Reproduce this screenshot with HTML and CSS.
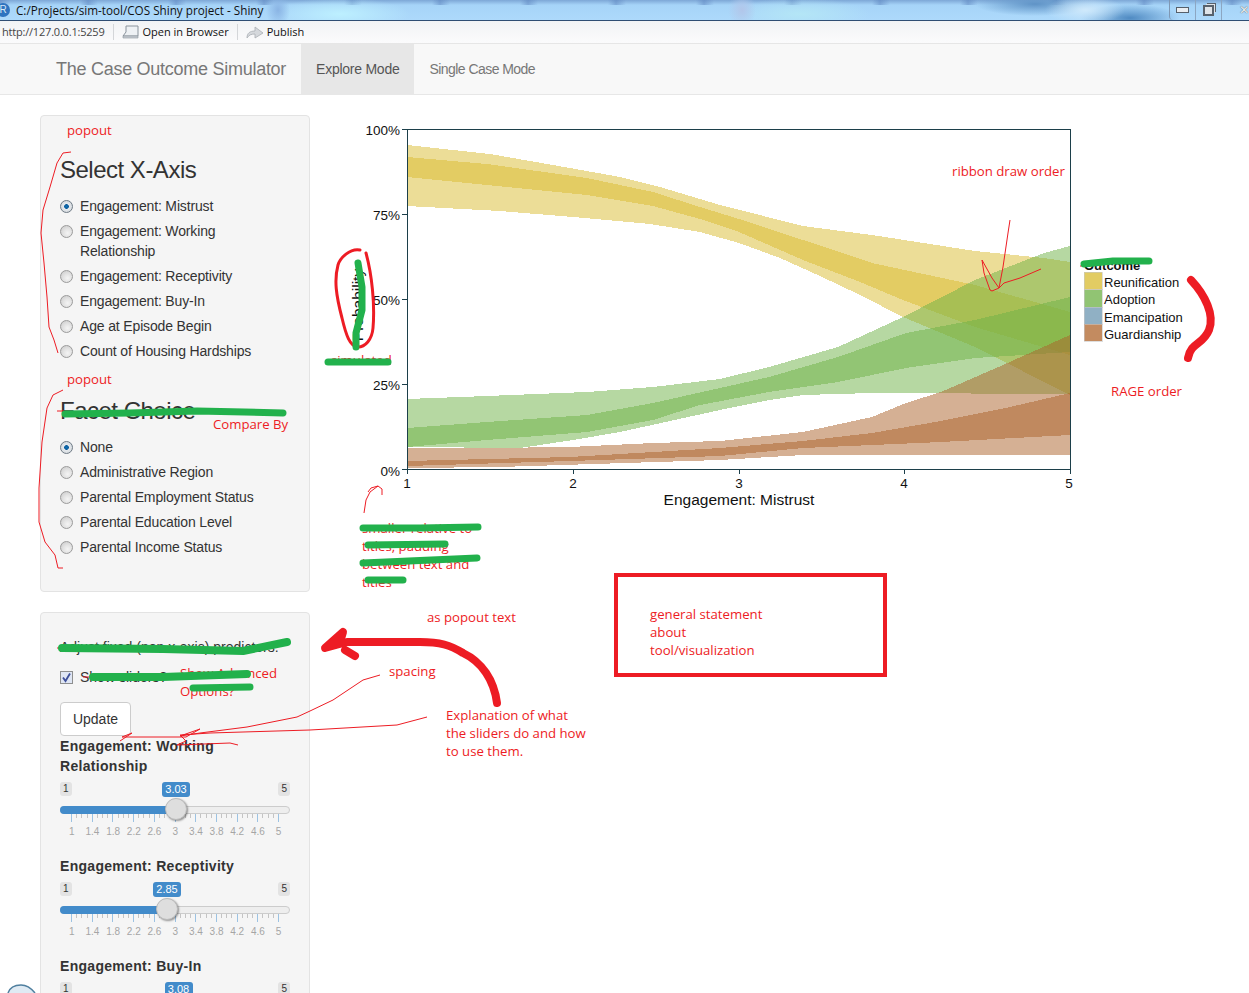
FILE: index.html
```html
<!DOCTYPE html>
<html lang="en">
<head>
  <meta charset="UTF-8">
  <title>The Case Outcome Simulator</title>
  <link rel="stylesheet" href="styles.css">
</head>
<body>
  <div class="titlebar">
    <span class="r-icon">R</span>
    <span class="window-title">C:/Projects/sim-tool/COS Shiny project - Shiny</span>
    <div class="window-buttons">
      <span class="win-btn"><i class="min-glyph"></i></span>
      <span class="win-btn"><i class="restore-glyph"></i></span>
      <span class="win-close">&#10005;</span>
    </div>
  </div>

  <div class="toolbar">
    <span class="url">http://127.0.0.1:5259</span>
    <span class="tool-sep"></span>
    <svg class="tool-icon" width="18" height="14" viewBox="0 0 18 14">
      <path d="M4 1h12v10H1l3-4z" fill="#eef1f4" stroke="#8a939c"/>
      <path d="M1 11h15v2H1z" fill="#c9ced4" stroke="#8a939c" stroke-width=".6"/>
    </svg>
    <span class="tool-label">Open in Browser</span>
    <span class="tool-sep"></span>
    <svg class="tool-icon" width="18" height="14" viewBox="0 0 18 14">
      <path d="M1 13c0-5 3-7 8-7V2l8 6-8 5V9c-4 0-6 1-8 4z" fill="#d5d8dc" stroke="#a9aeb4" stroke-width=".8"/>
    </svg>
    <span class="tool-label">Publish</span>
  </div>

  <nav class="navbar">
    <a class="brand">The Case Outcome Simulator</a>
    <a class="tab active">Explore Mode</a>
    <a class="tab">Single Case Mode</a>
  </nav>

  <div class="page">
    <aside class="sidebar">
      <div class="well">
        <h3>Select X-Axis</h3>
        <div class="radio-group">
          <label class="radio"><input type="radio" name="xaxis" checked><span>Engagement: Mistrust</span></label>
          <label class="radio"><input type="radio" name="xaxis"><span>Engagement: Working Relationship</span></label>
          <label class="radio"><input type="radio" name="xaxis"><span>Engagement: Receptivity</span></label>
          <label class="radio"><input type="radio" name="xaxis"><span>Engagement: Buy-In</span></label>
          <label class="radio"><input type="radio" name="xaxis"><span>Age at Episode Begin</span></label>
          <label class="radio"><input type="radio" name="xaxis"><span>Count of Housing Hardships</span></label>
        </div>
        <h3 class="second">Facet Choice</h3>
        <div class="radio-group">
          <label class="radio"><input type="radio" name="facet" checked><span>None</span></label>
          <label class="radio"><input type="radio" name="facet"><span>Administrative Region</span></label>
          <label class="radio"><input type="radio" name="facet"><span>Parental Employment Status</span></label>
          <label class="radio"><input type="radio" name="facet"><span>Parental Education Level</span></label>
          <label class="radio"><input type="radio" name="facet"><span>Parental Income Status</span></label>
        </div>
      </div>

      <div class="well well-sliders">
        <p class="adjust">Adjust fixed (non x-axis) predictors:</p>
        <div class="show-row">
          <span class="checkbox">
            <svg width="11" height="11" viewBox="0 0 11 11"><path d="M2 5.5l2.5 3.5L9 1.5" fill="none" stroke="#3d4f9a" stroke-width="1.8"/></svg>
          </span>
          <span>Show sliders?</span>
        </div>
        <button class="update">Update</button>

        <div class="control">
          <label class="control-label">Engagement: Working Relationship</label>
          <div class="slider">
            <div class="slider-ends"><span>1</span><span>5</span></div>
            <div class="track"><div class="bar" style="width:116px"></div></div>
            <span class="badge" style="left:116px">3.03</span>
            <span class="handle" style="left:116px"></span>
            <div class="ticks"></div>
            <div class="tick-labels"><span>1</span><span>1.4</span><span>1.8</span><span>2.2</span><span>2.6</span><span>3</span><span>3.4</span><span>3.8</span><span>4.2</span><span>4.6</span><span>5</span></div>
          </div>
        </div>

        <div class="control">
          <label class="control-label">Engagement: Receptivity</label>
          <div class="slider">
            <div class="slider-ends"><span>1</span><span>5</span></div>
            <div class="track"><div class="bar" style="width:107px"></div></div>
            <span class="badge" style="left:107px">2.85</span>
            <span class="handle" style="left:107px"></span>
            <div class="ticks"></div>
            <div class="tick-labels"><span>1</span><span>1.4</span><span>1.8</span><span>2.2</span><span>2.6</span><span>3</span><span>3.4</span><span>3.8</span><span>4.2</span><span>4.6</span><span>5</span></div>
          </div>
        </div>

        <div class="control">
          <label class="control-label">Engagement: Buy-In</label>
          <div class="slider">
            <div class="slider-ends"><span>1</span><span>5</span></div>
            <span class="badge" style="left:118.5px">3.08</span>
          </div>
        </div>
      </div>
    </aside>

    <main class="plot-area">
      <!-- viewBox uses page coordinates so the plot data reads straight off the screenshot -->
      <svg class="plot" width="900" height="410" viewBox="320 115 900 410">
        <g shape-rendering="crispEdges">
          <g fill="#d9bb2f" fill-opacity=".5">
            <polygon points="407,145 490,154 570,168 620,177 660,187 720,205 803,226 872,235 975,251 1044,258 1070,262 1070,395 975,347 903,317 860,295 820,276 780,258 739,243 700,232 650,224 573,217 500,211 407,206"/>
            <polygon points="407,157 487,164 587,178 653,192 700,207 739,219 803,240 872,263 975,285 1070,312 1070,355 975,327 903,300 860,282 803,260 739,232 700,219 653,206 587,195 487,185 407,177"/>
          </g>
          <g fill="#6db145" fill-opacity=".5">
            <polygon points="407,399 487,396 587,392 653,387 720,379 769,367 838,347 903,317 975,280 1044,253 1070,246 1070,394 872,393 803,395 770,400 720,410 670,421 620,432 573,440 520,448 407,447"/>
            <polygon points="407,428 487,422 587,415 653,403 720,388 769,377 838,357 906,333 975,320 1070,297 1070,352 975,358 906,368 838,382 769,392 700,405 653,420 587,432 487,440 407,447"/>
          </g>
          <g fill="#ac622a" fill-opacity=".5">
            <polygon points="407,448 487,448 570,447 653,443 720,441 803,432 872,417 906,403 941,392 1003,365 1070,335 1070,455 1003,455 803,455 720,460 500,467 407,468"/>
            <polygon points="407,461 570,457 720,448 803,441 872,433 941,421 1010,407 1070,393 1070,435 941,442 872,445 803,448 720,456 570,461 407,466"/>
          </g>
        </g>

        <g fill="none" stroke="#1c3f4a" stroke-width="1" shape-rendering="crispEdges">
          <rect x="407" y="129" width="663" height="340"/>
          <path d="M402 129h5M402 214h5M402 299h5M402 384h5M402 469h5"/>
          <path d="M407 469v5M573 469v5M739 469v5M904 469v5M1070 469v5"/>
        </g>

        <g class="axis-text" text-anchor="end">
          <text x="400" y="135">100%</text>
          <text x="400" y="220">75%</text>
          <text x="400" y="305">50%</text>
          <text x="400" y="390">25%</text>
          <text x="400" y="476">0%</text>
        </g>
        <g class="axis-text" text-anchor="middle">
          <text x="407" y="488">1</text>
          <text x="573" y="488">2</text>
          <text x="739" y="488">3</text>
          <text x="904" y="488">4</text>
          <text x="1069" y="488">5</text>
        </g>
        <text class="axis-title" x="739" y="505" text-anchor="middle">Engagement: Mistrust</text>
        <text class="axis-title" transform="translate(363 305) rotate(-90)" text-anchor="middle">Probability</text>

        <text class="legend-title" x="1084" y="270">Outcome</text>
        <g shape-rendering="crispEdges" stroke="#c8c8c8" stroke-width=".6">
          <rect x="1084" y="272" width="18" height="17.5" fill="#e2cc63"/>
          <rect x="1084" y="289.5" width="18" height="17.5" fill="#91c473"/>
          <rect x="1084" y="307" width="18" height="17" fill="#90b0c4"/>
          <rect x="1084" y="324" width="18" height="17" fill="#c38b60"/>
        </g>
        <g class="legend-text">
          <text x="1104" y="287">Reunification</text>
          <text x="1104" y="304">Adoption</text>
          <text x="1104" y="322">Emancipation</text>
          <text x="1104" y="339">Guardianship</text>
        </g>
      </svg>
    </main>
  </div>

  <!-- the review notes painted on top of the screenshot -->
  <div class="markup">
    <span class="note" style="left:67px;top:121px">popout</span>
    <span class="note" style="left:67px;top:370px">popout</span>
    <span class="note" style="left:213px;top:415px">Compare By</span>
    <span class="note" style="left:952px;top:162px">ribbon draw order</span>
    <span class="note" style="left:1111px;top:382px">RAGE order</span>
    <span class="note" style="left:427px;top:608px">as popout text</span>
    <span class="note" style="left:389px;top:662px">spacing</span>
    <span class="note" style="left:331px;top:351px">simulated</span>
    <span class="note block" style="left:446px;top:706px">Explanation of what<br>the sliders do and how<br>to use them.</span>
    <span class="note block" style="left:362px;top:519px">smaller relative to<br>titles, padding<br>between text and<br>titles</span>
    <span class="note block" style="left:180px;top:664px">Show Advanced<br>Options?</span>
    <div class="statement">general statement<br>about<br>tool/visualization</div>

    <svg class="scribble" width="1249" height="993" viewBox="0 0 1249 993">
      <g fill="none" stroke="#ed1c24" stroke-width="1" stroke-linejoin="round">
        <path d="M71 152 63 153 57 163 50 187 43 210 41 233 44 263 47 297 49 327 54 340 58 353"/>
        <path d="M63 390 53 395 47 408 42 442 39 488 39 522 45 542 55 555 58 568 63 568"/>
        <path d="M57 411H64M57 648H64M83 677H94M1080 266H1086"/>
        <path d="M380 675 363 680 333 700 310 711 297 717 247 727 200 733 180 736 200 729 186 737 122 737 132 733 120 741"/>
        <path d="M427 717 397 725 310 730 210 733 180 735 186 741 177 745 230 743 238 745"/>
        <path d="M364 513 366 500 370 492 378 486 371 488 368 492M378 486 382 489 382 495"/>
        <path d="M1010 220 1008 233 1003 267 999 288 992 291 990 290 984 273 982 260 992 278 999 288 1004 283 1020 278 1041 269"/>
      </g>
      <g fill="none" stroke="#ed1c24" stroke-linecap="round" stroke-linejoin="round">
        <path stroke-width="3" d="M360 250C350 248 340 258 338 265 334 280 336 295 342 318 346 335 350 347 358 347 365 347 372 340 373 328 375 305 372 275 366 253"/>
        <path stroke-width="8" d="M497 703C494 680 482 662 463 653 450 645 440 642 420 642H347L325 648 343 632 340 642M345 650 355 656"/>
        <path stroke-width="8" d="M1191 280C1205 295 1215 315 1209 330 1203 345 1191 342 1188 358"/>
      </g>
      <g fill="none" stroke="#22b14c" stroke-linecap="round" stroke-linejoin="round">
        <path stroke-width="7" d="M358 263 362 287 362 310 356 333V347"/>
        <path stroke-width="7" d="M328 362H388"/>
        <path stroke-width="7" d="M65 414 130 413 197 411 283 413"/>
        <path stroke-width="8" d="M62 648 163 649 243 651 287 642"/>
        <path stroke-width="8" d="M93 677H163L247 674"/>
        <path stroke-width="7" d="M193 688 250 687"/>
        <path stroke-width="7" d="M363 528H420L478 527"/>
        <path stroke-width="7" d="M368 545 445 544"/>
        <path stroke-width="7" d="M363 563 477 558"/>
        <path stroke-width="7" d="M368 580H403"/>
        <path stroke-width="7" d="M1084 264 1113 261H1149"/>
      </g>
      <path d="M8 993c2-6 8-8 13-8s10 3 14 8" fill="#dfeaf3" stroke="#4f7f9f" stroke-width="1.5"/>
    </svg>
  </div>
</body>
</html>
```

FILE: styles.css
```css
html, body {
  height: 993px;
  overflow: hidden;
}

body {
  margin: 0;
  font-family: "Liberation Sans", Arial, sans-serif;
  font-size: 14px;
  line-height: 20px;
  color: #333;
  background: #fff;
  position: relative;
}

/* window chrome */
.titlebar {
  height: 20px;
  display: flex;
  align-items: center;
  border-bottom: 1px solid #2f4d73;
  background:
    radial-gradient(ellipse 40px 14px at 1085px 10px, #cfe9fb 0, rgba(207,233,251,0) 100%),
    radial-gradient(ellipse 60px 12px at 1035px 4px, #5f93c6 0, rgba(95,147,198,0) 100%),
    radial-gradient(ellipse 50px 14px at 1130px 18px, #4f8ac2 0, rgba(79,138,194,0) 100%),
    radial-gradient(ellipse 12px 18px at 278px 10px, #8ab4e4 0, rgba(138,180,228,0) 100%),
    radial-gradient(ellipse 14px 18px at 742px 10px, #b2c6ea 0, rgba(178,198,234,0) 100%),
    radial-gradient(ellipse 70px 16px at 340px 14px, #bdf0ff 0, rgba(189,240,255,0) 100%),
    radial-gradient(ellipse 70px 16px at 800px 14px, #b4e6f6 0, rgba(180,230,246,0) 100%),
    repeating-linear-gradient(90deg, rgba(90,130,190,.5) 0, rgba(90,130,190,0) 10px, rgba(90,130,190,0) 80px, rgba(90,130,190,.5) 88px) 0 0 / 100% 5px no-repeat,
    linear-gradient(#7da7d6, #a6d4f8 5px, #add9fb);
}

.r-icon {
  width: 14px;
  height: 14px;
  margin-left: -4px;
  border-radius: 50%;
  background: #2f74c0;
  color: #d8e8f6;
  font-size: 10px;
  line-height: 14px;
  text-align: center;
  flex: none;
}

.window-title {
  margin-left: 6px;
  font-family: "Open Sans", sans-serif;
  font-size: 11.7px;
  color: #111;
}

.window-buttons {
  margin-left: auto;
  height: 20px;
  display: flex;
  align-items: center;
  border-left: 1px solid #7f97b3;
  border-bottom-left-radius: 4px;
  width: 80px;
  box-sizing: border-box;
}

.win-btn {
  width: 27px;
  height: 20px;
  border-right: 1px solid #8ca6c2;
  display: flex;
  align-items: center;
  justify-content: center;
  box-sizing: border-box;
}

.min-glyph {
  width: 11px;
  height: 4px;
  background: #e9edf1;
  border: 1px solid #56606b;
}

.restore-glyph {
  width: 7px;
  height: 7px;
  background: #dfe4e9;
  border: 2px solid #58626d;
  box-shadow: 2px -2px 0 -1px #dfe4e9, 3px -3px 0 -1px #58626d;
}

.win-close {
  margin-left: 17px;
  font-size: 12px;
  color: #e8edf2;
  text-shadow: 0 0 1px #333;
}

.toolbar {
  height: 22px;
  display: flex;
  align-items: center;
  font-family: "Open Sans", sans-serif;
  font-size: 11px;
  color: #111;
  background: linear-gradient(#f2f3f5, #fbfbfc);
  border-bottom: 1px solid #e6e6e6;
}

.url {
  margin-left: 2px;
  letter-spacing: -.2px;
  color: #444;
}

.tool-sep {
  width: 1px;
  height: 16px;
  margin: 0 8px;
  background: #d4d6d9;
}

.tool-icon {
  margin-right: 3px;
}

/* navbar */
.navbar {
  height: 50px;
  display: flex;
  align-items: stretch;
  background: #f8f8f8;
  border-bottom: 1px solid #e7e7e7;
  color: #777;
}

.brand {
  margin-left: 56px;
  margin-right: 15px;
  font-size: 18px;
  letter-spacing: -.27px;
  line-height: 51px;
  white-space: nowrap;
}

.tab {
  padding: 0 15px;
  line-height: 50px;
  letter-spacing: -.25px;
  white-space: nowrap;
}

.tab + .tab {
  letter-spacing: -.55px;
}

.tab.active {
  background: #e7e7e7;
  color: #555;
}

/* page */
.page {
  display: flex;
  align-items: flex-start;
  padding: 20px 0 0 40px;
}

.sidebar {
  width: 270px;
  flex: none;
}

.well {
  background: #f5f5f5;
  border: 1px solid #e3e3e3;
  border-radius: 4px;
  padding: 19px;
  height: 477px;
  box-sizing: border-box;
  margin-bottom: 20px;
}

.well-sliders {
  height: auto;
  margin-bottom: 0;
}

h3 {
  margin: 22px 0 13px;
  font-size: 24px;
  font-weight: 400;
  line-height: 26px;
  letter-spacing: -.5px;
}

h3.second {
  margin-top: 37px;
}

.radio {
  display: flex;
  margin-top: 5px;
  letter-spacing: -.15px;
}

.radio:first-child {
  margin-top: 0;
}

.radio input {
  appearance: none;
  width: 13px;
  height: 13px;
  margin: 4px 7px 0 0;
  flex: none;
  border: 1px solid #9b9b9b;
  border-radius: 50%;
  background: radial-gradient(circle at 60% 65%, #f4f4f4 0, #e2e2e2 45%, #c6c6c6 100%);
}

.radio input:checked {
  border-color: #6f7b86;
  background: radial-gradient(circle, #0f6fb5 0, #0a5c9c 26%, #e6eaee 34%, #cdd2d6 100%);
}

.adjust {
  margin: 5px 0 0;
  white-space: nowrap;
}

.show-row {
  display: flex;
  align-items: center;
  margin-top: 10px;
}

.checkbox {
  width: 11px;
  height: 11px;
  margin-right: 7px;
  border: 1px solid #8e8f8f;
  background: #dfe6f4;
  display: flex;
}

.update {
  display: block;
  width: 71px;
  height: 34px;
  margin-top: 15px;
  padding: 0;
  background: #fff;
  border: 1px solid #ccc;
  border-radius: 4px;
  font: inherit;
  color: #333;
}

.control-label {
  display: block;
  font-weight: 700;
  letter-spacing: .3px;
}

.slider {
  position: relative;
  margin-top: 6px;
  height: 74px;
}

.slider-ends {
  display: flex;
  justify-content: space-between;
  height: 14px;
}

.slider-ends span {
  padding: 0 3px;
  font-size: 10px;
  line-height: 14px;
  color: #333;
  background: #e3e3e3;
  border-radius: 3px;
}

.track {
  height: 6px;
  margin-top: 10px;
  background: #eee;
  border: 1px solid #ccc;
  border-radius: 4px;
}

.bar {
  height: 8px;
  margin: -1px 0 0 -1px;
  background: #428bca;
  border-radius: 4px 0 0 4px;
}

.badge {
  position: absolute;
  top: 0;
  transform: translateX(-50%);
  width: 28px;
  text-align: center;
  font-size: 11px;
  line-height: 15px;
  color: #fff;
  background: #428bca;
  border-radius: 3px;
}

.handle {
  position: absolute;
  top: 16px;
  width: 20px;
  height: 20px;
  margin-left: -11px;
  background: #dedede;
  border: 1px solid #bbb;
  border-radius: 50%;
  box-shadow: 1px 1px 2px rgba(0, 0, 0, .4);
}

.ticks {
  height: 8px;
  margin-left: 10.5px;
  width: 208px;
  background:
    repeating-linear-gradient(90deg, #9cc2e2 0, #9cc2e2 1px, transparent 1px, transparent 20.7px) 0 0 / 100% 8px no-repeat,
    repeating-linear-gradient(90deg, #c4c4c4 0, #c4c4c4 1px, transparent 1px, transparent 5.175px) 0 0 / 100% 4px no-repeat;
}

.tick-labels {
  display: flex;
  margin: 4px 0 0 1.4px;
  font-size: 10px;
  line-height: 12px;
  color: #a5a5a5;
}

.tick-labels span {
  width: 20.7px;
  flex: none;
  text-align: center;
}

/* plot */
.plot-area {
  margin-left: 10px;
}

.plot {
  display: block;
  overflow: visible;
}

.axis-text {
  font-size: 13.5px;
  fill: #111;
}

.axis-title {
  font-size: 15.5px;
  fill: #111;
}

.legend-title {
  font-size: 13px;
  font-weight: 700;
  fill: #111;
}

.legend-text {
  font-size: 13px;
  fill: #111;
}

/* paint markup on top of everything */
.markup {
  position: absolute;
  left: 0;
  top: 0;
  width: 1249px;
  height: 993px;
  overflow: hidden;
  pointer-events: none;
}

.scribble {
  position: absolute;
  left: 0;
  top: 0;
}

.note {
  position: absolute;
  font-family: "Open Sans", sans-serif;
  font-size: 13.2px;
  line-height: 18px;
  color: #ed1c24;
  white-space: nowrap;
}

.statement {
  position: absolute;
  left: 614px;
  top: 573px;
  width: 273px;
  height: 104px;
  box-sizing: border-box;
  padding: 28px 0 0 32px;
  border: 4px solid #ed1c24;
  font-family: "Open Sans", sans-serif;
  font-size: 13.2px;
  line-height: 18px;
  color: #ed1c24;
}
```
